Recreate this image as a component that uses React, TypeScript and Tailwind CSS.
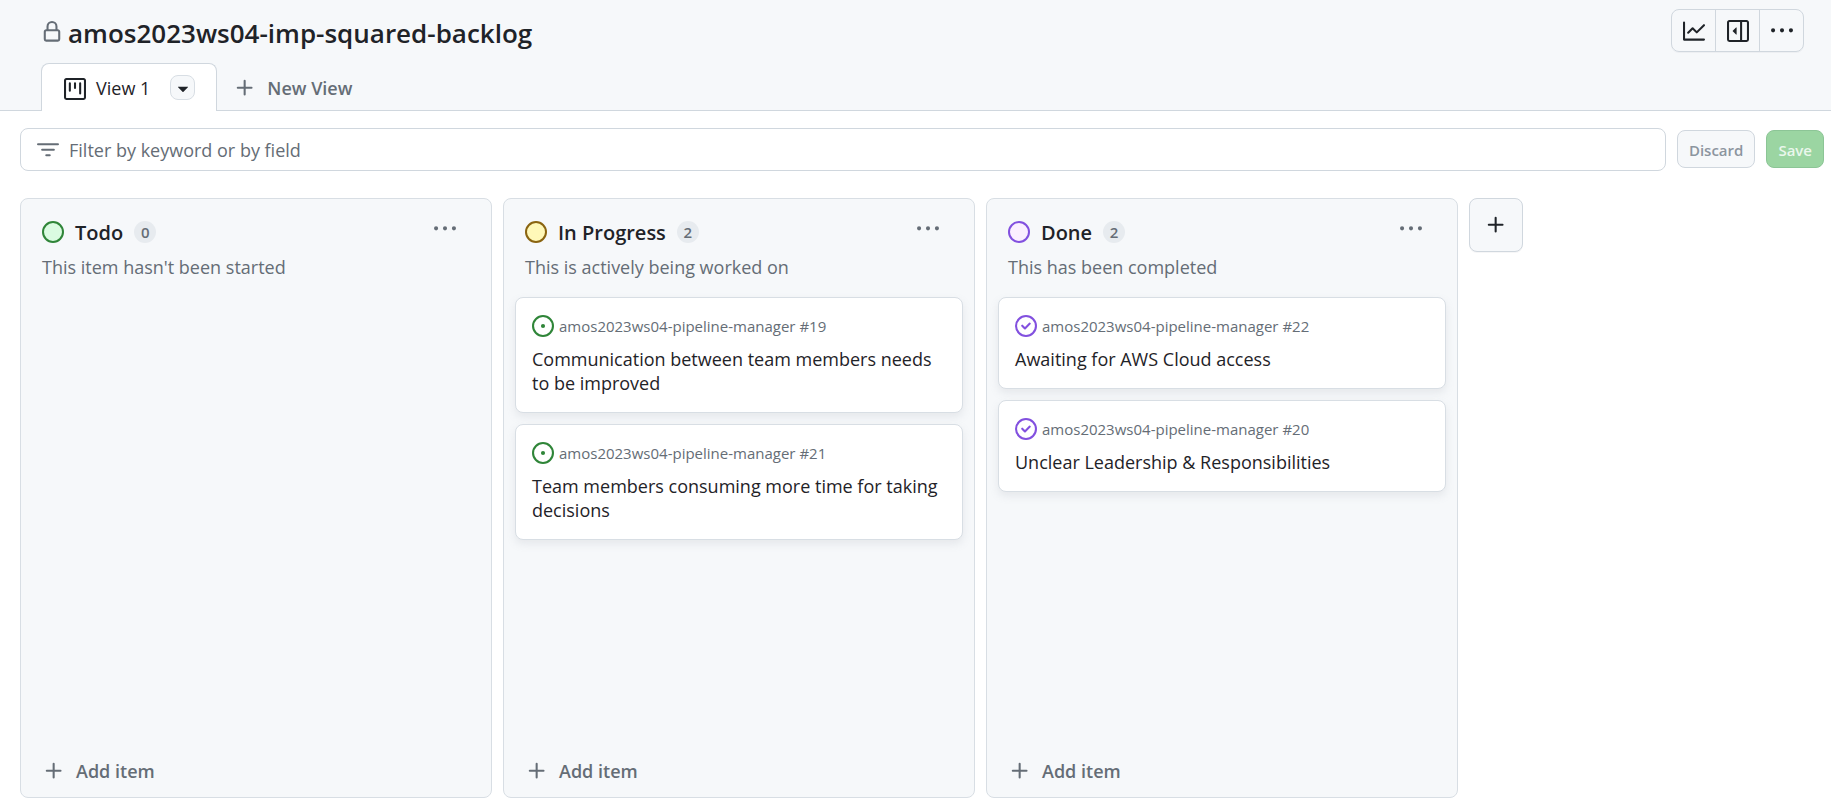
import React from "react";

const icons = {
  lock: "M4 4a4 4 0 0 1 8 0v2h.25c.966 0 1.75.784 1.75 1.75v5.5A1.75 1.75 0 0 1 12.25 15h-8.5A1.75 1.75 0 0 1 2 13.25v-5.5C2 6.784 2.784 6 3.75 6H4Zm8.25 3.5h-8.5a.25.25 0 0 0-.25.25v5.5c0 .138.112.25.25.25h8.5a.25.25 0 0 0 .25-.25v-5.5a.25.25 0 0 0-.25-.25ZM10.5 6V4a2.5 2.5 0 1 0-5 0v2Z",
  board:
    "M1.75 0h12.5C15.216 0 16 .784 16 1.75v12.5A1.75 1.75 0 0 1 14.25 16H1.75A1.75 1.75 0 0 1 0 14.25V1.75C0 .784.784 0 1.75 0ZM1.5 1.75v12.5c0 .138.112.25.25.25h12.5a.25.25 0 0 0 .25-.25V1.75a.25.25 0 0 0-.25-.25H1.75a.25.25 0 0 0-.25.25ZM11.75 3a.75.75 0 0 1 .75.75v7.5a.75.75 0 0 1-1.5 0v-7.5a.75.75 0 0 1 .75-.75Zm-8.25.75a.75.75 0 0 1 1.5 0v5.5a.75.75 0 0 1-1.5 0ZM8 3a.75.75 0 0 1 .75.75v3.5a.75.75 0 0 1-1.5 0v-3.5A.75.75 0 0 1 8 3Z",
  caret:
    "m4.427 7.427 3.396 3.396a.25.25 0 0 0 .354 0l3.396-3.396A.25.25 0 0 0 11.396 7H4.604a.25.25 0 0 0-.177.427Z",
  plus: "M7.75 2a.75.75 0 0 1 .75.75V7h4.25a.75.75 0 0 1 0 1.5H8.5v4.25a.75.75 0 0 1-1.5 0V8.5H2.75a.75.75 0 0 1 0-1.5H7V2.75A.75.75 0 0 1 7.75 2Z",
  filter:
    "M.75 3h14.5a.75.75 0 0 1 0 1.5H.75a.75.75 0 0 1 0-1.5ZM3 7.75A.75.75 0 0 1 3.75 7h8.5a.75.75 0 0 1 0 1.5h-8.5A.75.75 0 0 1 3 7.75Zm3 4a.75.75 0 0 1 .75-.75h2.5a.75.75 0 0 1 0 1.5h-2.5a.75.75 0 0 1-.75-.75Z",
  graph:
    "M1.5 1.75V13.5h13.75a.75.75 0 0 1 0 1.5H.75a.75.75 0 0 1-.75-.75V1.75a.75.75 0 0 1 1.5 0Zm14.28 2.53-5.25 5.25a.75.75 0 0 1-1.06 0L7 7.06 4.28 9.78a.751.751 0 0 1-1.042-.018.751.751 0 0 1-.018-1.042l3.25-3.25a.75.75 0 0 1 1.06 0L10 7.94l4.72-4.72a.751.751 0 0 1 1.042.018.751.751 0 0 1 .018 1.042Z",
  sidebar:
    "m4.177 7.823 2.396-2.396A.25.25 0 0 1 7 5.604v4.792a.25.25 0 0 1-.427.177L4.177 8.177a.25.25 0 0 1 0-.354ZM0 1.75C0 .784.784 0 1.75 0h12.5C15.216 0 16 .784 16 1.75v12.5A1.75 1.75 0 0 1 14.25 16H1.75A1.75 1.75 0 0 1 0 14.25Zm1.75-.25a.25.25 0 0 0-.25.25v12.5c0 .138.112.25.25.25H9.5v-13Zm12.5 13a.25.25 0 0 0 .25-.25V1.75a.25.25 0 0 0-.25-.25H11v13Z",
  kebab:
    "M8 9a1.5 1.5 0 1 0 0-3 1.5 1.5 0 0 0 0 3ZM1.5 9a1.5 1.5 0 1 0 0-3 1.5 1.5 0 0 0 0 3Zm13 0a1.5 1.5 0 1 0 0-3 1.5 1.5 0 0 0 0 3Z",
  open: "M8 9.5a1.5 1.5 0 1 0 0-3 1.5 1.5 0 0 0 0 3ZM8 0a8 8 0 1 1 0 16A8 8 0 0 1 8 0ZM1.5 8a6.5 6.5 0 1 0 13 0 6.5 6.5 0 0 0-13 0Z",
  closed:
    "M11.28 6.78a.75.75 0 0 0-1.06-1.06L7.25 8.69 5.78 7.22a.75.75 0 0 0-1.06 1.06l2 2a.75.75 0 0 0 1.06 0l3.5-3.5ZM16 8A8 8 0 1 1 0 8a8 8 0 0 1 16 0Zm-1.5 0a6.5 6.5 0 1 0-13 0 6.5 6.5 0 0 0 13 0Z",
};

type IconName = keyof typeof icons;

function Icon({ name, className = "" }: { name: IconName; className?: string }) {
  return (
    <svg viewBox="0 0 16 16" className={`size-[22px] shrink-0 fill-current ${className}`} aria-hidden="true">
      <path d={icons[name]} />
    </svg>
  );
}

interface Item {
  number: number;
  title: string;
}

interface Column {
  name: string;
  description: string;
  dot: string;
  status: "open" | "closed";
  items: Item[];
}

const columns: Column[] = [
  {
    name: "Todo",
    description: "This item hasn't been started",
    dot: "border-[#2f8538] bg-[#dafbe1]",
    status: "open",
    items: [],
  },
  {
    name: "In Progress",
    description: "This is actively being worked on",
    dot: "border-[#8a6410] bg-[#fff8b8]",
    status: "open",
    items: [
      { number: 19, title: "Communication between team members needs to be improved" },
      { number: 21, title: "Team members consuming more time for taking decisions" },
    ],
  },
  {
    name: "Done",
    description: "This has been completed",
    dot: "border-[#8250df] bg-[#fbefff]",
    status: "closed",
    items: [
      { number: 22, title: "Awaiting for AWS Cloud access" },
      { number: 20, title: "Unclear Leadership & Responsibilities" },
    ],
  },
];

function Card({ item, status }: { item: Item; status: Column["status"] }) {
  return (
    <article className="rounded-lg border border-[#d8dee4] bg-white px-4 py-[17px] shadow-[0_4px_8px_rgba(140,149,159,0.16)]">
      <div className="flex items-center gap-[5px] text-[15px] leading-[22px] text-[#656d76]">
        <Icon name={status} className={status === "open" ? "text-[#2f8538]" : "text-[#8250df]"} />
        <span>amos2023ws04-pipeline-manager #{item.number}</span>
      </div>
      <h3 className="mt-[10px] text-[18px] leading-6">
        <a href="#">{item.title}</a>
      </h3>
    </article>
  );
}

function BoardColumn({ column }: { column: Column }) {
  return (
    <section className="flex w-[472px] shrink-0 flex-col rounded-lg border border-[#d8dee4] bg-[#f6f8fa]">
      <header className="flex items-start justify-between pr-[35px] pl-[21px]">
        <div className="pt-5">
          <div className="flex items-center">
            <span className={`size-[22px] rounded-full border-2 ${column.dot}`} />
            <h2 className="ml-[11px] pt-0.5 text-[20px] leading-6 font-semibold">{column.name}</h2>
            <span className="ml-[11px] flex size-[22px] items-center justify-center rounded-full bg-[#e7ebef] text-[15px] font-semibold text-[#656d76]">
              {column.items.length}
            </span>
          </div>
          <p className="mt-2 text-[18px] leading-7 text-[#656d76]">{column.description}</p>
        </div>
        <button type="button" aria-label={`${column.name} actions`} className="mt-[19px] text-[#656d76]">
          <Icon name="kebab" />
        </button>
      </header>
      <div className="mt-4 flex grow flex-col gap-[11px] px-[11px]">
        {column.items.map((item) => (
          <Card key={item.number} item={item} status={column.status} />
        ))}
      </div>
      <button
        type="button"
        className="flex items-center gap-[11px] px-[22px] py-3 text-left text-[18px] leading-7 font-semibold text-[#656d76]"
      >
        <Icon name="plus" />
        Add item
      </button>
    </section>
  );
}

export default function App() {
  return (
    <div className="flex min-h-screen flex-col overflow-hidden bg-white font-['Open_Sans',sans-serif] text-[#1f2328]">
      <header className="border-b border-[#d0d7de] bg-[#f6f8fa]">
        <div className="flex items-start justify-between pt-[9px] pr-[27px] pl-[41px]">
          <h1 className="flex items-center gap-[5px] pt-[6px] text-[26px] leading-9 font-semibold">
            <Icon name="lock" className="mb-[2px] text-[#656d76]" />
            amos2023ws04-imp-squared-backlog
          </h1>
          <div className="flex divide-x divide-[#d0d7de] rounded-lg border border-[#d0d7de] shadow-[0_1px_0_rgba(31,35,40,0.04)]">
            <button type="button" aria-label="Insights" className="flex h-[41px] w-11 items-center justify-center">
              <Icon name="graph" />
            </button>
            <button type="button" aria-label="Project details" className="flex h-[41px] w-11 items-center justify-center">
              <Icon name="sidebar" />
            </button>
            <button type="button" aria-label="More options" className="flex h-[41px] w-[43px] items-center justify-center">
              <Icon name="kebab" />
            </button>
          </div>
        </div>
        <nav className="mt-[11px] -mb-px flex pl-[41px]">
          <div className="flex h-12 items-center rounded-t-lg border border-b-0 border-[#d0d7de] bg-white pr-[21px] pl-[22px]">
            <a href="#" className="flex items-center gap-[10px] pt-0.5 text-[18px]">
              <Icon name="board" />
              View 1
            </a>
            <button
              type="button"
              aria-label="View options"
              className="ml-5 flex size-[25px] items-center justify-center rounded-lg border border-[#d8dee4] bg-[#f6f8fa]"
            >
              <Icon name="caret" />
            </button>
          </div>
          <button type="button" className="ml-[17px] flex items-center gap-[11px] pt-0.5 text-[18px] font-semibold text-[#656d76]">
            <Icon name="plus" />
            New View
          </button>
        </nav>
      </header>

      <div className="flex items-center gap-[11px] pt-[17px] pr-[7px] pl-5">
        <label className="flex h-[43px] grow items-center gap-[10px] rounded-lg border border-[#d0d7de] px-4 text-[#656d76]">
          <Icon name="filter" />
          <input
            type="text"
            aria-label="Filter items"
            placeholder="Filter by keyword or by field"
            className="grow pt-0.5 text-[18px] outline-none placeholder:text-[#656d76]"
          />
        </label>
        <button
          type="button"
          className="mb-px h-[38px] rounded-lg border border-[#d0d7de] bg-[#f6f8fa] px-[11px] pt-0.5 text-[15px] font-semibold text-[#8c959f]"
        >
          Discard
        </button>
        <button
          type="button"
          className="mb-px h-[38px] rounded-lg border border-[#8cc596] bg-[#9bd5a2] px-[11px] pt-0.5 text-[15px] font-semibold text-[#eaf7ec]"
        >
          Save
        </button>
      </div>

      <main className="flex grow gap-[11px] pt-[27px] pb-px pl-5">
        {columns.map((column) => (
          <BoardColumn key={column.name} column={column} />
        ))}
        <button
          type="button"
          aria-label="Add a new column"
          className="flex size-[54px] items-center justify-center rounded-lg border border-[#d0d7de] bg-[#f6f8fa] shadow-[0_1px_0_rgba(31,35,40,0.04)]"
        >
          <Icon name="plus" />
        </button>
      </main>
    </div>
  );
}
